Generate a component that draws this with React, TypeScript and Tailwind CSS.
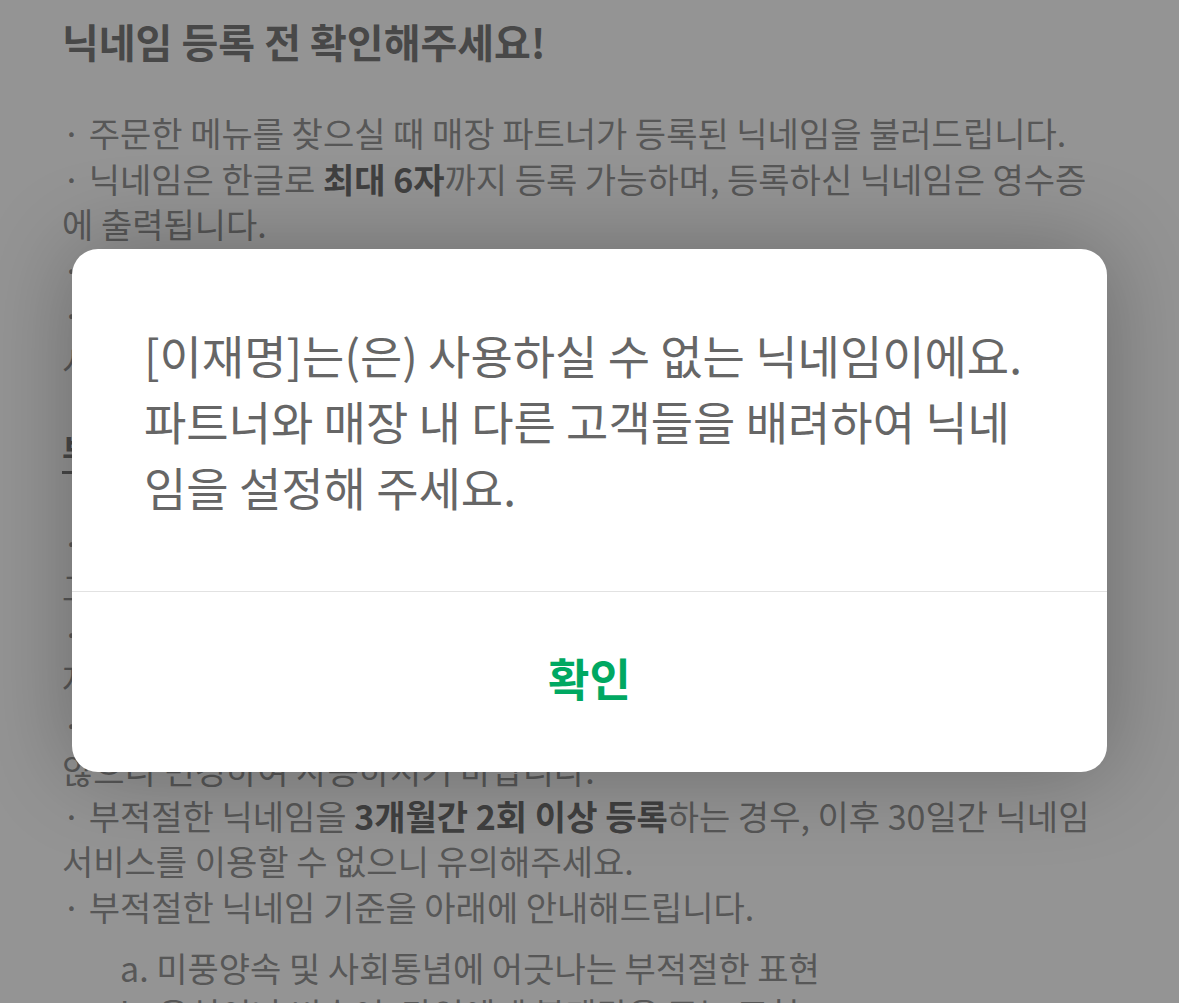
import React from "react";

const font = { fontFamily: '"Noto Sans CJK KR", "Noto Sans", sans-serif' };

type Line = { text: React.ReactNode; indent?: boolean };

const topLines: Line[] = [
  { text: "· 주문한 메뉴를 찾으실 때 매장 파트너가 등록된 닉네임을 불러드립니다." },
  {
    text: (
      <>
        · 닉네임은 한글로 <b className="font-bold text-[#6e6e6e]">최대 6자</b>까지 등록 가능하며, 등록하신 닉네임은 영수증
      </>
    ),
  },
  { text: "에 출력됩니다." },
  { text: "· 닉네임은 1일 1회 변경 가능하며, 다음 주문부터 적용됩니다." },
  { text: "· 등록된 닉네임은 매장 파트너가 호명할 수 있도록 정확하게 입력해 주" },
  { text: "시기 바랍니다." },
];

const ruleLines: Line[] = [
  { text: "· 욕설, 비속어, 선정적인 표현 등의 부적절한 닉네임은 호명되지 않습니다." },
  { text: "고객님의 닉네임 대신 주문번호로 호명될 수 있습니다." },
  { text: "· 부적절한 닉네임으로 판단되는 경우 안내 없이 닉네임이 초기화될 수" },
  { text: "자세한 내용은 고객센터를 통해 확인하실 수 있습니다." },
  { text: "· 정치인, 연예인 등 특정 인물의 이름을 연상시키는 닉네임은 호명되지" },
  { text: "않으니 변경하여 사용하시기 바랍니다." },
  {
    text: (
      <>
        · 부적절한 닉네임을 <b className="font-bold text-[#6e6e6e]">3개월간 2회 이상 등록</b>하는 경우, 이후 30일간 닉네임
      </>
    ),
  },
  { text: "서비스를 이용할 수 없으니 유의해주세요." },
  { text: "· 부적절한 닉네임 기준을 아래에 안내해드립니다." },
];

const criteria = [
  "a. 미풍양속 및 사회통념에 어긋나는 부적절한 표현",
  "b. 욕설이나 비속어, 타인에게 불쾌감을 주는 표현",
];

function TextLine({ line }: { line: Line }) {
  return (
    <div className={"whitespace-nowrap " + (line.indent ? "pl-[58px]" : "")}>{line.text}</div>
  );
}

export default function App() {
  return (
    <div className="relative w-[1179px] h-[1003px] overflow-hidden bg-white" style={font}>
      <main className="px-[62px] pt-[13px] text-[34px] leading-[45.5px] text-[#969696]">
        <h1 className="text-[40px] leading-[56px] font-bold text-[#7c7c7c]">닉네임 등록 전 확인해주세요!</h1>
        <div className="mt-[41px]">
          {topLines.map((l, i) => (
            <TextLine key={i} line={l} />
          ))}
        </div>
        <div className="mt-[45px] font-bold text-[#7c7c7c] underline underline-offset-[6px]">
          부적절한 닉네임 이용 안내
        </div>
        <div className="mt-[46px]">
          {ruleLines.map((l, i) => (
            <TextLine key={i} line={l} />
          ))}
        </div>
        <div className="mt-[16px] pl-[58px]">
          {criteria.map((c) => (
            <div key={c} className="whitespace-nowrap">
              {c}
            </div>
          ))}
        </div>
      </main>

      {/* dimmed overlay + alert */}
      <div className="absolute inset-0 bg-black/[0.42] flex justify-center items-start pt-[249px]">
        <div className="w-[1035px] bg-white rounded-[26px] shadow-[0_0_90px_rgba(0,0,0,0.28)] overflow-hidden">
          <div className="pl-[72px] pr-[40px] pt-[72px] pb-[72px] text-[46px] leading-[66px] text-[#666666]">
            <div className="whitespace-nowrap">[이재명]는(은) 사용하실 수 없는 닉네임이에요.</div>
            <div className="whitespace-nowrap">파트너와 매장 내 다른 고객들을 배려하여 닉네</div>
            <div className="whitespace-nowrap">임을 설정해 주세요.</div>
          </div>
          <div className="h-px bg-[#e2e2e2]" />
          <button className="w-full h-[180px] pb-[8px] flex items-center justify-center text-[45px] font-bold text-[#00a862]">
            확인
          </button>
        </div>
      </div>
    </div>
  );
}
